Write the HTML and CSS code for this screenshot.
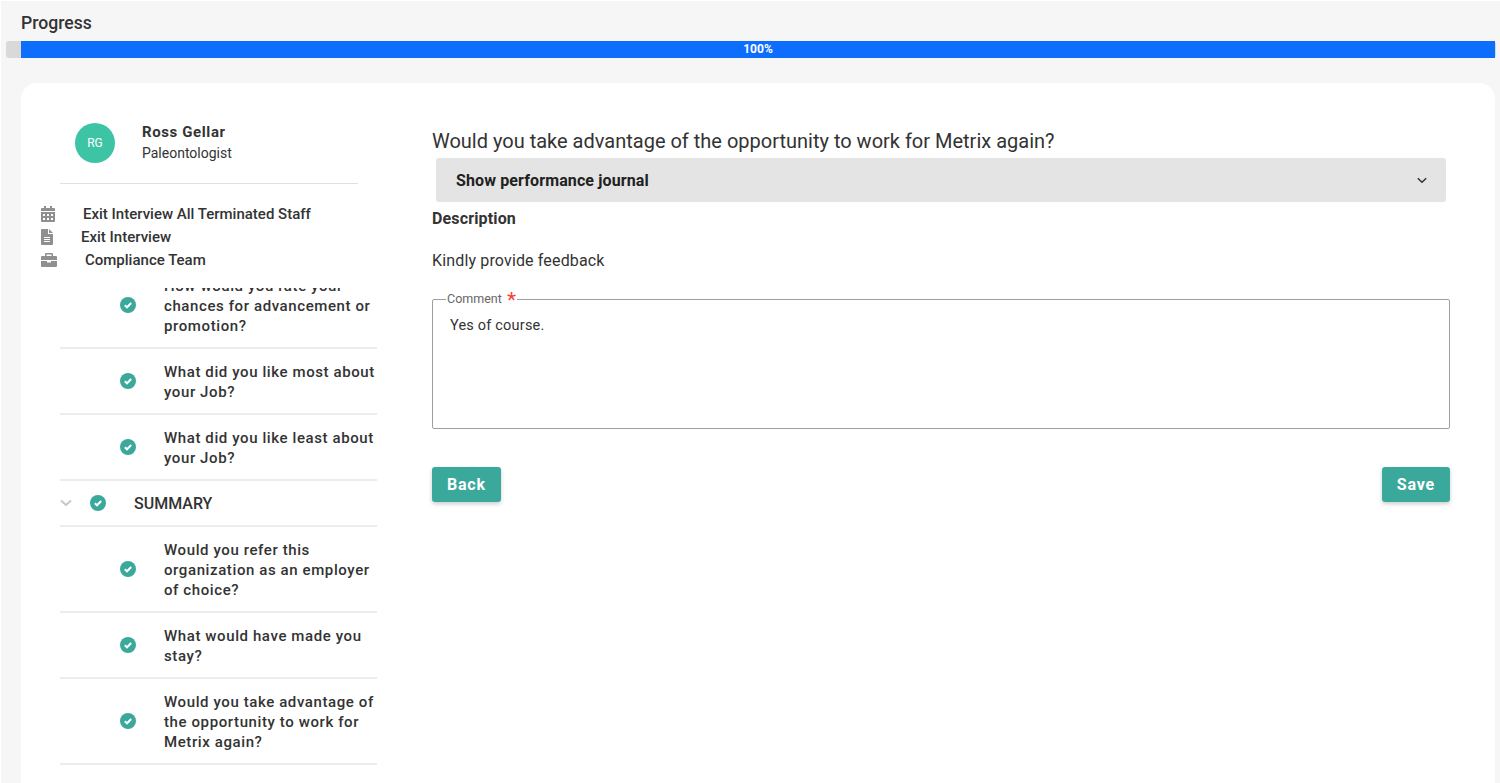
FILE: index.html
```html
<!DOCTYPE html>
<html lang="en">
<head>
    <meta charset="UTF-8">
    <title>Exit Interview</title>
    <link rel="stylesheet" href="styles.css">
</head>
<body>

    <header class="progress-head">
        <h1 class="progress-title">Progress</h1>
        <div class="progress-track">
            <div class="progress-fill">100%</div>
        </div>
    </header>

    <div class="card">
        <aside class="sidebar">
            <div class="profile">
                <div class="avatar">RG</div>
                <div class="profile-text">
                    <div class="profile-name">Ross Gellar</div>
                    <div class="profile-role">Paleontologist</div>
                </div>
            </div>
            <hr class="profile-line">

            <ul class="info">
                <li>
                    <svg class="info-icon" width="14" height="16" viewBox="0 0 14 16"><path fill-rule="evenodd" d="M3 0h2v2h4V0h2v2h2a1 1 0 0 1 1 1v2H0V3a1 1 0 0 1 1-1h2zM0 6h14v9a1 1 0 0 1-1 1H1a1 1 0 0 1-1-1zm2 2v2h2V8zm4 0v2h2V8zm4 0v2h2V8zm-8 4v2h2v-2zm4 0v2h2v-2zm4 0v2h2v-2z"/></svg>
                    <span>Exit Interview All Terminated Staff</span>
                </li>
                <li>
                    <svg class="info-icon" width="12" height="16" viewBox="0 0 12 16"><path fill-rule="evenodd" d="M1 0h6v5h5v10a1 1 0 0 1-1 1H1a1 1 0 0 1-1-1V1a1 1 0 0 1 1-1zm7 0 4 4H8zM3 8v1h6V8zm0 2v1h6v-1zm0 2v1h6v-1z"/></svg>
                    <span>Exit Interview</span>
                </li>
                <li>
                    <svg class="info-icon" width="16" height="14" viewBox="0 0 16 14"><path fill-rule="evenodd" d="M5 0h6a1 1 0 0 1 1 1v2h3a1 1 0 0 1 1 1v3H0V4a1 1 0 0 1 1-1h3V1a1 1 0 0 1 1-1zm.5 1.500V3h5V1.500zM0 8h6v1.500h4V8h6v5a1 1 0 0 1-1 1H1a1 1 0 0 1-1-1z"/></svg>
                    <span>Compliance Team</span>
                </li>
            </ul>

            <div class="steps">
                <div class="step step-clipped">
                    <svg class="check" width="16" height="16" viewBox="0 0 16 16"><circle cx="8" cy="8" r="8"/><path d="M4.800 8.200 7 10.300l4.200-4.300"/></svg>
                    <span>How would you rate your chances for advancement or promotion?</span>
                </div>
                <div class="step">
                    <svg class="check" width="16" height="16" viewBox="0 0 16 16"><circle cx="8" cy="8" r="8"/><path d="M4.800 8.200 7 10.300l4.200-4.300"/></svg>
                    <span>What did you like most about your Job?</span>
                </div>
                <div class="step">
                    <svg class="check" width="16" height="16" viewBox="0 0 16 16"><circle cx="8" cy="8" r="8"/><path d="M4.800 8.200 7 10.300l4.200-4.300"/></svg>
                    <span>What did you like least about your Job?</span>
                </div>
                <div class="section">
                    <svg class="section-arrow" width="12" height="8" viewBox="0 0 12 8"><path d="M1 1.500 6 6l5-4.500"/></svg>
                    <svg class="check" width="16" height="16" viewBox="0 0 16 16"><circle cx="8" cy="8" r="8"/><path d="M4.800 8.200 7 10.300l4.200-4.300"/></svg>
                    <span>SUMMARY</span>
                </div>
                <div class="step">
                    <svg class="check" width="16" height="16" viewBox="0 0 16 16"><circle cx="8" cy="8" r="8"/><path d="M4.800 8.200 7 10.300l4.200-4.300"/></svg>
                    <span>Would you refer this organization as an employer of choice?</span>
                </div>
                <div class="step">
                    <svg class="check" width="16" height="16" viewBox="0 0 16 16"><circle cx="8" cy="8" r="8"/><path d="M4.800 8.200 7 10.300l4.200-4.300"/></svg>
                    <span>What would have made you stay?</span>
                </div>
                <div class="step">
                    <svg class="check" width="16" height="16" viewBox="0 0 16 16"><circle cx="8" cy="8" r="8"/><path d="M4.800 8.200 7 10.300l4.200-4.300"/></svg>
                    <span>Would you take advantage of the opportunity to work for Metrix again?</span>
                </div>
            </div>
        </aside>

        <main class="content">
            <h2 class="question">Would you take advantage of the opportunity to work for Metrix again?</h2>

            <div class="journal">
                <span>Show performance journal</span>
                <svg class="journal-arrow" width="10" height="7" viewBox="0 0 10 7"><path d="M.8 1.200 5 5.200l4.200-4"/></svg>
            </div>

            <h3 class="desc-title">Description</h3>
            <p class="desc-text">Kindly provide feedback</p>

            <fieldset class="comment">
                <legend class="comment-label">Comment <span class="required">*</span></legend>
                <div class="comment-value">Yes of course.</div>
            </fieldset>

            <div class="actions">
                <button class="btn">Back</button>
                <button class="btn">Save</button>
            </div>
        </main>
    </div>

</body>
</html>
```

FILE: styles.css
```css
* {
    box-sizing: border-box;
}

html, body {
    height: 783px;
    overflow: hidden;
}

body {
    margin: 0;
    background-color: #f6f6f6;
    border-top: 1px solid #fff;
    border-left: 1px solid #fff;
    font-family: Roboto, "Liberation Sans", sans-serif;
    color: #333;
}

.progress-head {
    padding-left: 5px;
}

.progress-title {
    margin: 12px 0 8px 15px;
    font-size: 17.6px;
    line-height: 20px;
    font-weight: 500;
}

.progress-track {
    width: 1490px;
    height: 17px;
    padding-left: 15px;
    background-color: #d9d9d9;
    border-radius: 3px;
}

.progress-fill {
    width: 1474px;
    height: 17px;
    background-color: #0d6efd;
    color: #fff;
    font-size: 12px;
    font-weight: 700;
    line-height: 17px;
    text-align: center;
}

.card {
    display: flex;
    width: 1474px;
    height: 720px;
    margin: 25px 0 0 20px;
    background-color: #fff;
    border-radius: 16px 16px 0 0;
}

.sidebar {
    flex: 0 0 411px;
    padding-top: 39px;
}

.profile {
    display: flex;
    align-items: center;
    margin-left: 54px;
}

.avatar {
    width: 40px;
    height: 40px;
    border-radius: 50%;
    background-color: #3dc4a4;
    color: #fff;
    font-size: 12px;
    line-height: 40px;
    text-align: center;
}

.profile-text {
    margin-left: 27px;
}

.profile-name {
    font-size: 15px;
    font-weight: 700;
    line-height: 20px;
    letter-spacing: 0.6px;
}

.profile-role {
    margin-top: 1px;
    font-size: 14px;
    line-height: 20px;
}

.profile-line {
    width: 298px;
    margin: 20px 0 0 39px;
    border: 0;
    border-top: 1px solid #e0e0e0;
}

.info {
    margin: 18px 0 0 20px;
    padding: 0;
    list-style: none;
    font-size: 15px;
    font-weight: 500;
}

.info li {
    display: flex;
    align-items: center;
    gap: 28px;
    height: 23px;
}

.info-icon {
    fill: #8f8f8f;
}

.steps {
    width: 317px;
    height: 496px;
    margin: 17px 0 0 39px;
    overflow: hidden;
}

.step {
    display: flex;
    align-items: center;
    gap: 28px;
    padding: 12px 0 12px 60px;
    border-bottom: 2px solid #ececec;
    font-size: 15px;
    font-weight: 500;
    line-height: 20px;
    letter-spacing: 0.6px;
}

.step span {
    margin: 1px 0 -1px;
}

.step-clipped {
    margin-top: -25px;
}

.section {
    display: flex;
    align-items: center;
    height: 46px;
    border-bottom: 2px solid #ececec;
    font-size: 16px;
    font-weight: 500;
}

.section-arrow {
    margin-right: 18px;
    fill: none;
    stroke: #c6c6c6;
    stroke-width: 2;
}

.section span {
    margin-left: 28px;
}

.check {
    flex: none;
}

.check circle {
    fill: #3aa99b;
}

.check path {
    fill: none;
    stroke: #fff;
    stroke-width: 2;
}

.content {
    flex: 0 0 1018px;
    padding-top: 44px;
}

.question {
    margin: 0;
    font-size: 20px;
    font-weight: 400;
    line-height: 28px;
}

.journal {
    display: flex;
    justify-content: space-between;
    align-items: center;
    height: 44px;
    margin: 3px 4px 0;
    padding: 0 19px 0 20px;
    background-color: #e4e4e4;
    border-radius: 3px;
    color: #212121;
    font-size: 16px;
    font-weight: 700;
    letter-spacing: 0.12px;
}

.journal-arrow {
    fill: none;
    stroke: #333;
    stroke-width: 1.500;
}

.desc-title {
    margin: 7px 0 0;
    font-size: 16px;
    font-weight: 700;
    line-height: 20px;
    letter-spacing: 0.15px;
}

.desc-text {
    margin: 22px 0 0;
    font-size: 16px;
    line-height: 20px;
    letter-spacing: 0.15px;
}

.comment {
    height: 137px;
    margin: 21px 0 0;
    padding: 0 17px;
    border: 1px solid #9e9e9e;
    border-radius: 2px;
}

.comment-label {
    padding: 0 1px;
    margin-left: -4px;
    color: #666;
    font-size: 12.5px;
    line-height: 14px;
}

.required {
    margin-left: 2px;
    color: #f44336;
    font-size: 21px;
    line-height: 10px;
    vertical-align: -4px;
}

.comment-value {
    margin-top: 10px;
    font-size: 14.5px;
    line-height: 20px;
    letter-spacing: 0.2px;
}

.actions {
    display: flex;
    justify-content: space-between;
    margin-top: 38px;
}

.btn {
    height: 35px;
    padding: 0 15px;
    border: 0;
    border-radius: 3px;
    background-color: #3aa99b;
    box-shadow: 0 2px 4px rgba(0, 0, 0, 0.2);
    color: #fff;
    font-family: inherit;
    font-size: 16px;
    font-weight: 700;
    letter-spacing: 0.8px;
}
```
